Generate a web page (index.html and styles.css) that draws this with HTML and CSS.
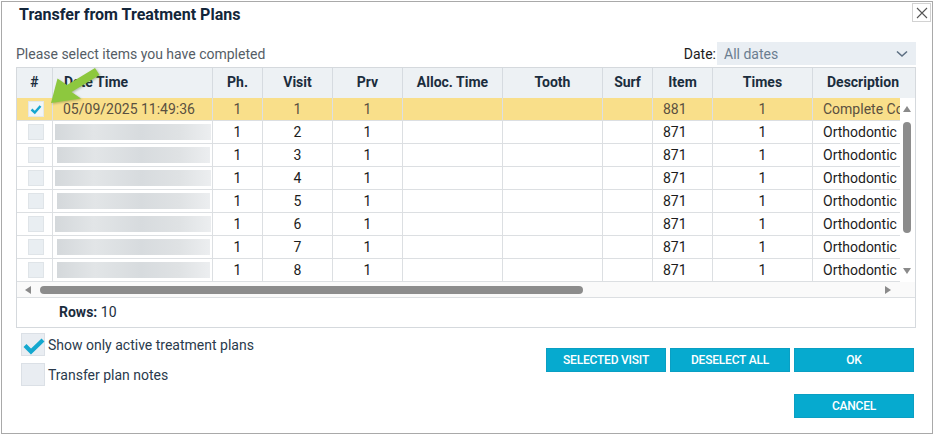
FILE: index.html
```html
<!DOCTYPE html>
<html lang="en">
<head>
    <meta charset="UTF-8">
    <meta name="viewport" content="width=device-width, initial-scale=1.0">
    <title>Transfer from Treatment Plans</title>
    <link rel="stylesheet" href="styles.css">
</head>
<body>
    <div class="dialog">
        <div class="title-bar">
            <h1 class="title">Transfer from Treatment Plans</h1>
            <button class="close-button" aria-label="Close">
                <svg width="12" height="12" viewBox="0 0 12 12"><path d="M1 1L11 11M11 1L1 11" stroke="#555" stroke-width="1.1" fill="none"/></svg>
            </button>
        </div>

        <div class="toolbar">
            <span class="hint">Please select items you have completed</span>
            <div class="date-filter">
                <span class="date-label">Date:</span>
                <div class="select">
                    <span>All dates</span>
                    <svg width="12" height="8" viewBox="0 0 12 8"><path d="M1 1.5L6 6L11 1.5" stroke="#5d6f82" stroke-width="1.6" fill="none"/></svg>
                </div>
            </div>
        </div>

        <div class="grid">
            <div class="grid-header cols">
                <div class="hcell">#</div>
                <div class="hcell left">Date Time</div>
                <div class="hcell">Ph.</div>
                <div class="hcell">Visit</div>
                <div class="hcell">Prv</div>
                <div class="hcell">Alloc. Time</div>
                <div class="hcell">Tooth</div>
                <div class="hcell">Surf</div>
                <div class="hcell">Item</div>
                <div class="hcell">Times</div>
                <div class="hcell">Description</div>
            </div>

            <div class="grid-body">
                <div class="rows">
                    <div class="row cols selected">
                        <div class="cell"><span class="row-check checked"><svg width="16" height="16" viewBox="0 0 16 16"><path d="M3.5 8.5L6.8 11.5L12.5 5" stroke="#16a6cf" stroke-width="2.4" fill="none"/></svg></span></div>
                        <div class="cell left">05/09/2025 11:49:36</div>
                        <div class="cell">1</div>
                        <div class="cell">1</div>
                        <div class="cell">1</div>
                        <div class="cell"></div>
                        <div class="cell"></div>
                        <div class="cell"></div>
                        <div class="cell left">881</div>
                        <div class="cell">1</div>
                        <div class="cell left">Complete Co</div>
                    </div>
                    <div class="row cols">
                        <div class="cell"><span class="row-check"></span></div>
                        <div class="cell date"><span class="blur wide"></span></div>
                        <div class="cell">1</div><div class="cell">2</div><div class="cell">1</div>
                        <div class="cell"></div><div class="cell"></div><div class="cell"></div>
                        <div class="cell left">871</div><div class="cell">1</div>
                        <div class="cell left">Orthodontic</div>
                    </div>
                    <div class="row cols">
                        <div class="cell"><span class="row-check"></span></div>
                        <div class="cell date"><span class="blur"></span></div>
                        <div class="cell">1</div><div class="cell">3</div><div class="cell">1</div>
                        <div class="cell"></div><div class="cell"></div><div class="cell"></div>
                        <div class="cell left">871</div><div class="cell">1</div>
                        <div class="cell left">Orthodontic</div>
                    </div>
                    <div class="row cols">
                        <div class="cell"><span class="row-check"></span></div>
                        <div class="cell date"><span class="blur wide"></span></div>
                        <div class="cell">1</div><div class="cell">4</div><div class="cell">1</div>
                        <div class="cell"></div><div class="cell"></div><div class="cell"></div>
                        <div class="cell left">871</div><div class="cell">1</div>
                        <div class="cell left">Orthodontic</div>
                    </div>
                    <div class="row cols">
                        <div class="cell"><span class="row-check"></span></div>
                        <div class="cell date"><span class="blur"></span></div>
                        <div class="cell">1</div><div class="cell">5</div><div class="cell">1</div>
                        <div class="cell"></div><div class="cell"></div><div class="cell"></div>
                        <div class="cell left">871</div><div class="cell">1</div>
                        <div class="cell left">Orthodontic</div>
                    </div>
                    <div class="row cols">
                        <div class="cell"><span class="row-check"></span></div>
                        <div class="cell date"><span class="blur wide"></span></div>
                        <div class="cell">1</div><div class="cell">6</div><div class="cell">1</div>
                        <div class="cell"></div><div class="cell"></div><div class="cell"></div>
                        <div class="cell left">871</div><div class="cell">1</div>
                        <div class="cell left">Orthodontic</div>
                    </div>
                    <div class="row cols">
                        <div class="cell"><span class="row-check"></span></div>
                        <div class="cell date"><span class="blur"></span></div>
                        <div class="cell">1</div><div class="cell">7</div><div class="cell">1</div>
                        <div class="cell"></div><div class="cell"></div><div class="cell"></div>
                        <div class="cell left">871</div><div class="cell">1</div>
                        <div class="cell left">Orthodontic</div>
                    </div>
                    <div class="row cols">
                        <div class="cell"><span class="row-check"></span></div>
                        <div class="cell date"><span class="blur"></span></div>
                        <div class="cell">1</div><div class="cell">8</div><div class="cell">1</div>
                        <div class="cell"></div><div class="cell"></div><div class="cell"></div>
                        <div class="cell left">871</div><div class="cell">1</div>
                        <div class="cell left">Orthodontic</div>
                    </div>
                </div>

                <div class="vscroll">
                    <span class="arrow arrow-up"></span>
                    <span class="vthumb"></span>
                    <span class="spacer"></span>
                    <span class="arrow arrow-down"></span>
                </div>
            </div>

            <div class="hscroll">
                <span class="arrow arrow-left"></span>
                <span class="hthumb"></span>
                <span class="spacer"></span>
                <span class="arrow arrow-right"></span>
                <span class="corner"></span>
            </div>

            <div class="grid-footer"><b>Rows:</b> 10</div>
        </div>

        <div class="bottom">
            <div class="options">
                <label class="option">
                    <span class="checkbox"><svg width="24" height="23" viewBox="0 0 24 23"><path d="M4 12.5L10 18.5L22 7" stroke="#14a8cf" stroke-width="4.2" fill="none"/></svg></span>
                    Show only active treatment plans
                </label>
                <label class="option">
                    <span class="checkbox"></span>
                    Transfer plan notes
                </label>
            </div>
            <div class="actions">
                <button class="action">SELECTED VISIT</button>
                <button class="action">DESELECT ALL</button>
                <button class="action">OK</button>
                <button class="action cancel">CANCEL</button>
            </div>
        </div>

        <svg class="pointer-arrow" width="64" height="42" viewBox="0 0 64 42">
            <path d="M10 37L16.5 12.5L26 19L54 2L58.5 9L30.5 26L40 32.5Z" fill="#8dc83e"/>
        </svg>
    </div>
</body>
</html>
```

FILE: styles.css
```css
body {
    margin: 0;
    background: #ffffff;
    font-family: Roboto, "Liberation Sans", Arial, sans-serif;
    font-size: 14px;
    color: #1c1c1c;
}

.dialog {
    position: relative;
    width: 932px;
    height: 433px;
    margin: 1px 0 0 1px;
    padding: 0 16px 0 14px;
    border: 1px solid #a9a9a9;
    box-sizing: border-box;
    background: #ffffff;
    overflow: hidden;
}

/* title */
.title-bar {
    display: flex;
    justify-content: space-between;
    align-items: flex-start;
    height: 30px;
}

.title {
    margin: 2px 0 0 3px;
    font-size: 16px;
    font-weight: bold;
    color: #13263a;
    line-height: 21px;
}

.close-button {
    width: 19px;
    height: 19px;
    margin: 1px -15px 0 0;
    padding: 0;
    border: 1px solid #d2d2d2;
    background: #ffffff;
    display: flex;
    align-items: center;
    justify-content: center;
}

/* toolbar */
.toolbar {
    display: flex;
    justify-content: space-between;
    align-items: center;
    height: 23px;
    margin-top: 10px;
}

.hint {
    color: #555d66;
}

.date-filter {
    display: flex;
    align-items: center;
}

.date-label {
    color: #1c1c1c;
    margin-right: 1px;
}

.select {
    width: 199px;
    height: 23px;
    padding: 0 8px 0 7px;
    box-sizing: border-box;
    background: #e9eef3;
    display: flex;
    align-items: center;
    justify-content: space-between;
    color: #6b7d90;
}

/* grid */
.grid {
    margin-top: 2px;
    border: 1px solid #d5d9dd;
}

.cols {
    display: grid;
    grid-template-columns: 36px 160px 50px 70px 70px 100px 100px 50px 60px 100px 100px;
}

.grid-header {
    height: 30px;
    background: #edf1f4;
}

.hcell {
    border-right: 1px solid #d6dbe0;
    font-weight: bold;
    color: #1b2d3d;
    text-align: center;
    line-height: 29px;
    white-space: nowrap;
}

.hcell.left {
    text-align: left;
    padding-left: 11px;
}

.hcell:last-child {
    border-right: none;
}

.grid-body {
    display: flex;
    height: 184px;
}

.rows {
    width: 883px;
    overflow: hidden;
}

.row {
    height: 22px;
    border-bottom: 1px solid #dcdfe2;
}

.row.selected {
    background: #f9df8a;
    color: #5a5040;
}

.cell {
    border-right: 1px solid #dcdfe2;
    line-height: 22px;
    text-align: center;
    white-space: nowrap;
    overflow: hidden;
}

.cell.left {
    text-align: left;
    padding-left: 10px;
}

.cell.date {
    padding: 3px 0 0 2px;
    box-sizing: border-box;
}

.row-check {
    display: inline-block;
    width: 16px;
    height: 16px;
    margin-top: 3px;
    margin-left: 3px;
    vertical-align: top;
    background: #e9eef2;
    border: 1px solid #dfe4e8;
    box-sizing: border-box;
}

.row-check.checked {
    background: #f1f5f7;
    border-color: #e3e8eb;
}

.row-check svg {
    display: block;
    margin: -1px;
}

.blur {
    display: block;
    width: 153px;
    height: 16px;
    margin-left: 2px;
    background: linear-gradient(90deg, #d4d8db, #e2e5e7 25%, #d7dbde 55%, #dfe2e4 80%, #eceef0);
    filter: blur(0.7px);
}

.blur.wide {
    width: 156px;
    margin-left: 0;
}

/* scrollbars */
.vscroll {
    width: 14px;
    display: flex;
    flex-direction: column;
    align-items: center;
    background: #ffffff;
}

.spacer {
    flex: 1;
}

.arrow {
    display: flex;
    align-items: center;
    justify-content: center;
}

.arrow::before {
    content: "";
    border: 4px solid transparent;
}

.arrow-up {
    height: 22px;
}

.arrow-up::before {
    border-bottom: 6px solid #8a8a8a;
    border-top-width: 0;
}

.arrow-down {
    height: 23px;
}

.arrow-down::before {
    border-top: 6px solid #8a8a8a;
    border-bottom-width: 0;
}

.vthumb {
    width: 8px;
    height: 111px;
    margin-top: 2px;
    border-radius: 4px;
    background: #8c8c8c;
}

.hscroll {
    display: flex;
    align-items: center;
    height: 15px;
    border-bottom: 1px solid #dcdfe2;
    background: #fafafa;
}

.arrow-left,
.arrow-right {
    width: 22px;
    height: 15px;
}

.arrow-left::before {
    border-right: 6px solid #8a8a8a;
    border-left-width: 0;
}

.arrow-right::before {
    border-left: 6px solid #8a8a8a;
    border-right-width: 0;
}

.hthumb {
    width: 543px;
    height: 8px;
    margin-left: 1px;
    border-radius: 4px;
    background: #8c8c8c;
}

.corner {
    width: 16px;
}

.grid-footer {
    height: 29px;
    line-height: 29px;
    padding-left: 42px;
    color: #1b2d3d;
}

/* bottom */
.bottom {
    display: flex;
    justify-content: space-between;
    align-items: flex-start;
}

.options {
    display: flex;
    flex-direction: column;
    gap: 7px;
    margin: 5px 0 0 5px;
}

.option {
    display: flex;
    align-items: center;
    gap: 3px;
    color: #2a3a4c;
}

.checkbox {
    width: 24px;
    height: 23px;
    background: #e9edf2;
    border: 1px solid #dbe0e6;
    box-sizing: border-box;
}

.checkbox svg {
    display: block;
    margin: -1px;
}

.actions {
    display: grid;
    grid-template-columns: repeat(3, 120px);
    gap: 22px 4px;
    margin: 20px 2px 0 0;
}

.action {
    height: 24px;
    padding: 0;
    border: 1px solid #0a9fc3;
    background: #06aacf;
    color: #ffffff;
    font-family: Roboto, "Liberation Sans", Arial, sans-serif;
    font-size: 12px;
    font-weight: 500;
    letter-spacing: -0.2px;
}

.action.cancel {
    grid-column: 3;
}

.pointer-arrow {
    position: absolute;
    left: 39px;
    top: 64px;
    filter: drop-shadow(1px 1px 1px rgba(60, 90, 20, 0.35));
}
```
